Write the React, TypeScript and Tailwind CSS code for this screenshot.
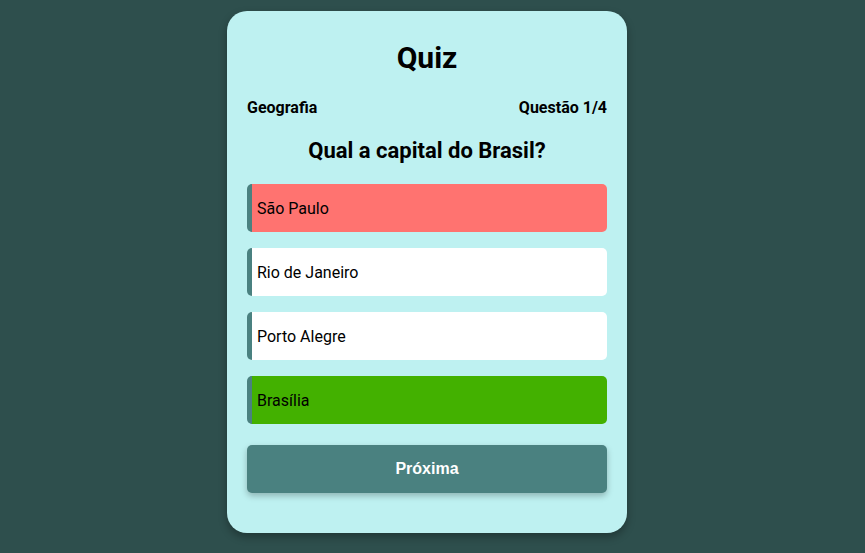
import React from "react";

interface Option {
  label: string;
  state: "wrong" | "right" | "none";
}

const options: Option[] = [
  { label: "São Paulo", state: "wrong" },
  { label: "Rio de Janeiro", state: "none" },
  { label: "Porto Alegre", state: "none" },
  { label: "Brasília", state: "right" },
];

const bgFor = (state: Option["state"]) =>
  state === "wrong" ? "bg-[#ff7370]" : state === "right" ? "bg-[#43b100]" : "bg-white";

const App = () => {
  return (
    <div
      className="h-screen w-full overflow-hidden bg-[#2e4f4d] flex justify-center pt-[11px] pr-[11px]"
      style={{ fontFamily: "Roboto, sans-serif" }}
    >
      <div className="w-[400px] h-[522px] bg-[#bef1f1] rounded-[20px] shadow-[0_4px_8px_rgba(0,0,0,0.3)] px-5 pt-6 pb-10 flex flex-col text-black">
        <h1 className="text-[30px] leading-[45px] font-bold text-center">Quiz</h1>
        <div className="mt-[16px] flex justify-between text-base leading-6 font-bold">
          <span>Geografia</span>
          <span>Questão 1/4</span>
        </div>
        <h2 className="mt-[14px] text-[22px] leading-[33px] font-bold text-center">
          Qual a capital do Brasil?
        </h2>
        <div className="mt-[17px] flex flex-col gap-4">
          {options.map((opt) => (
            <div
              key={opt.label}
              className={`${bgFor(opt.state)} h-12 rounded-[5px] border-l-[5px] border-[#4a8180] pl-[5px] pt-px flex items-center text-base`}
            >
              {opt.label}
            </div>
          ))}
        </div>
        <button
          className="mt-[21px] h-12 w-full rounded-[5px] bg-[#4a8180] text-white font-bold text-base shadow-[0_3px_6px_rgba(0,0,0,0.25)]"
          style={{ fontFamily: "'Liberation Sans', Arial, sans-serif" }}
        >
          Próxima
        </button>
      </div>
    </div>
  );
};

export default App;
